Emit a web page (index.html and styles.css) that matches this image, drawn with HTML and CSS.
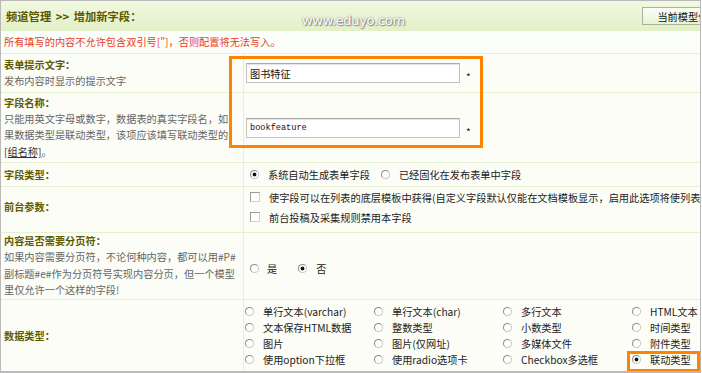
FILE: index.html
```html
<html lang="zh-CN"><head><meta http-equiv="Content-Type" content="text/html; charset=UTF-8">
  <link rel="stylesheet" href="styles.css">
</head>
<body>
<div class="page">
  <div class="head">
    <span class="title">频道管理 &gt;&gt; 增加新字段：</span>
    <span class="mark">www.eduyo.com</span>
    <button type="button" class="model-btn">当前模型信息</button>
  </div>
  <div class="warn">所有填写的内容不允许包含双引号["]，否则配置将无法写入。</div>

  <div class="row r1">
    <div class="label">
      <b>表单提示文字：</b>
      <span class="desc">发布内容时显示的提示文字</span>
    </div>
    <div class="field"><input class="txt" type="text" value="图书特征"><span class="req">*</span></div>
  </div>

  <div class="row r2">
    <div class="label">
      <b>字段名称：</b>
      <span class="desc">只能用英文字母或数字，数据表的真实字段名，如<br>果数据类型是联动类型，该项应该填写联动类型的<br><u>[组名称]</u>。</span>
    </div>
    <div class="field"><input class="txt mono" type="text" value="bookfeature"><span class="req">*</span></div>
  </div>

  <div class="row r3">
    <div class="label"><b>字段类型：</b></div>
    <div class="field">
      <label class="opt"><input class="rd" type="radio" name="ftype" checked>系统自动生成表单字段</label>
      <label class="opt next"><input class="rd" type="radio" name="ftype">已经固化在发布表单中字段</label>
    </div>
  </div>

  <div class="row r4">
    <div class="label"><b>前台参数：</b></div>
    <div class="field col">
      <label class="opt line"><input class="ck" type="checkbox">使字段可以在列表的底层模板中获得(自定义字段默认仅能在文档模板显示，启用此选项将使列表的性能略有下降)</label>
      <label class="opt line"><input class="ck" type="checkbox">前台投稿及采集规则禁用本字段</label>
    </div>
  </div>

  <div class="row r5">
    <div class="label">
      <b>内容是否需要分页符：</b>
      <span class="desc">如果内容需要分页符，不论何种内容，都可以用#P#<br>副标题#e#作为分页符号实现内容分页，但一个模型<br>里仅允许一个这样的字段!</span>
    </div>
    <div class="field">
      <label class="opt yes"><input class="rd" type="radio" name="page">是</label>
      <label class="opt no"><input class="rd" type="radio" name="page" checked>否</label>
    </div>
  </div>

  <div class="row r6">
    <div class="label"><b>数据类型：</b></div>
    <div class="field">
      <div class="types">
        <label class="opt"><input class="rd" type="radio" name="dtype">单行文本(varchar)</label>
        <label class="opt"><input class="rd" type="radio" name="dtype">单行文本(char)</label>
        <label class="opt"><input class="rd" type="radio" name="dtype">多行文本</label>
        <label class="opt"><input class="rd" type="radio" name="dtype">HTML文本</label>
        <label class="opt"><input class="rd" type="radio" name="dtype">文本保存HTML数据</label>
        <label class="opt"><input class="rd" type="radio" name="dtype">整数类型</label>
        <label class="opt"><input class="rd" type="radio" name="dtype">小数类型</label>
        <label class="opt"><input class="rd" type="radio" name="dtype">时间类型</label>
        <label class="opt"><input class="rd" type="radio" name="dtype">图片</label>
        <label class="opt"><input class="rd" type="radio" name="dtype">图片(仅网址)</label>
        <label class="opt"><input class="rd" type="radio" name="dtype">多媒体文件</label>
        <label class="opt"><input class="rd" type="radio" name="dtype">附件类型</label>
        <label class="opt"><input class="rd" type="radio" name="dtype">使用option下拉框</label>
        <label class="opt"><input class="rd" type="radio" name="dtype">使用radio选项卡</label>
        <label class="opt"><input class="rd" type="radio" name="dtype">Checkbox多选框</label>
        <label class="opt"><input class="rd" type="radio" name="dtype" checked>联动类型</label>
      </div>
    </div>
  </div>

  <div class="hl hl-inputs"></div>
  <div class="hl hl-type"></div>
</div>
</body>
</html>
```

FILE: styles.css
```css
body {
  margin: 0;
  background: #fff;
  font-family: "Noto Sans CJK SC", "Liberation Sans", sans-serif;
  font-size: 10.2px;
  color: #222;
}

.page {
  position: relative;
  width: 701px;
  height: 373px;
  box-sizing: border-box;
  border: 1px solid #b9b9b9;
  border-bottom-width: 2px;
  background: #fbfdf6;
  overflow: hidden;
}

.head {
  position: relative;
  display: flex;
  align-items: center;
  height: 30px;
  padding-left: 5px;
  background: linear-gradient(to bottom, #f1f8e0, #e3f0c7);
  overflow: hidden;
}

.title {
  font-size: 11.3px;
  font-weight: bold;
  word-spacing: 2px;
  color: #5b5800;
  white-space: nowrap;
}

.mark {
  position: absolute;
  left: 301px;
  top: 12px;
  font-family: "DejaVu Sans", sans-serif;
  font-size: 13px;
  letter-spacing: -0.3px;
  color: #fff;
  text-shadow: 0 0 2px #6d6d6d, 1px 1px 1px #8a8a8a;
}

.model-btn {
  flex: none;
  width: 92px;
  height: 18px;
  margin-left: auto;
  margin-right: -34px;
  padding: 0;
  border: 1px solid #a9b49a;
  background: linear-gradient(to bottom, #fbfdf6, #e8f2d6);
  font-family: "Noto Sans CJK SC", sans-serif;
  font-size: 10.2px;
  color: #111;
  white-space: nowrap;
}

.warn {
  height: 22px;
  line-height: 22px;
  padding-left: 3px;
  color: #e8401c;
  background: #fcfef9;
  border-bottom: 1px solid #e6f1cf;
}

.row {
  display: grid;
  grid-template-columns: 243px 1fr;
  border-bottom: 1px solid #e6f1cf;
}

.r1 { height: 38px; }
.r2 { height: 69px; }
.r3 { height: 23px; }
.r4 { height: 45px; }
.r5 { height: 66px; }
.r6 { height: 71px; border-bottom: 0; }

.label {
  display: flex;
  flex-direction: column;
  justify-content: center;
  padding: 0 3px;
  border-right: 1px solid #e6f1cf;
  white-space: nowrap;
}

.label b {
  line-height: 16px;
  color: #5e5b00;
}

.desc {
  line-height: 16.5px;
  color: #666;
}

.desc u {
  color: #333;
}

.r4 .label,
.r5 .label {
  padding-bottom: 6px;
}

.field {
  display: flex;
  align-items: center;
  padding-left: 6px;
  overflow: hidden;
  white-space: nowrap;
}

.field.col {
  flex-direction: column;
  align-items: flex-start;
  justify-content: flex-start;
}

.txt {
  width: 214px;
  height: 20px;
  box-sizing: border-box;
  margin: 0 0 0 -4px;
  padding: 0 3px;
  border: 1px solid #c2c2c2;
  border-top-color: #a8a8a8;
  box-shadow: inset 0 1px 1px #e4e4e4;
  background: #fff;
  font-family: "Noto Sans CJK SC", sans-serif;
  font-size: 10.2px;
  color: #111;
}

.txt.mono {
  font-family: "Liberation Mono", monospace;
  font-size: 8.6px;
}

.req {
  margin: 7px 0 0 6px;
  font-size: 10px;
}

.opt {
  display: flex;
  align-items: center;
  gap: 9px;
}

.opt.next {
  margin-left: 11px;
}

.opt.line {
  height: 20px;
}

.opt.yes {
  gap: 8px;
  margin-right: 21px;
}

.rd,
.ck {
  appearance: none;
  -webkit-appearance: none;
  flex: none;
  width: 9px;
  height: 9px;
  margin: 0;
  box-sizing: border-box;
  border: 1px solid #c6c6c6;
  border-top-color: #8c8c8c;
  border-left-color: #8c8c8c;
  background: #fff;
}

.rd {
  border-radius: 50%;
}

.rd:checked {
  background: radial-gradient(circle, #111 0 1.6px, #fff 2.3px);
}

.ck {
  width: 10px;
  height: 10px;
  border-color: #d0d0d0;
  border-top-color: #9a9a9a;
  border-left-color: #9a9a9a;
}

.r6 .field {
  padding-left: 1px;
}

.types {
  display: grid;
  grid-template-columns: repeat(4, 129px);
  grid-auto-rows: 16px;
}

/* orange highlight frames drawn over the form */
.hl {
  position: absolute;
  box-sizing: border-box;
  border: 3px solid #ff8200;
}

.hl-inputs {
  left: 228px;
  top: 55px;
  width: 254px;
  height: 92px;
}

.hl-type {
  left: 626px;
  top: 350px;
  width: 73px;
  height: 21px;
}
```
